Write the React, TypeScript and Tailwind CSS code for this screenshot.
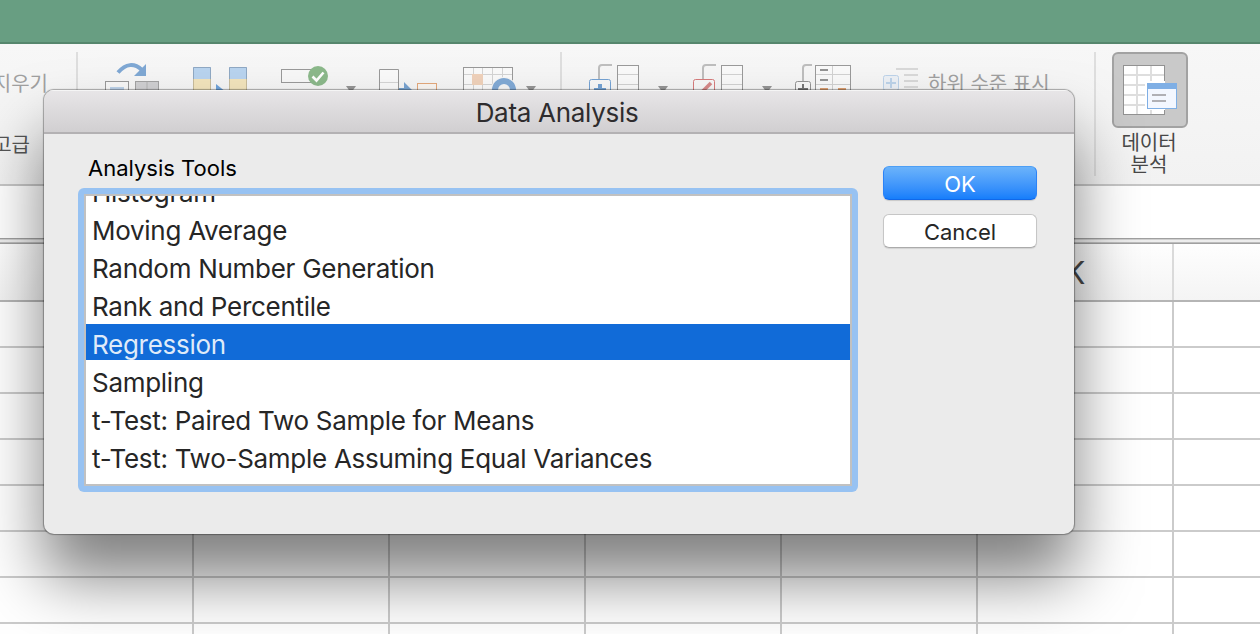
import React from "react";

const tools = [
  "Histogram",
  "Moving Average",
  "Random Number Generation",
  "Rank and Percentile",
  "Regression",
  "Sampling",
  "t-Test: Paired Two Sample for Means",
  "t-Test: Two-Sample Assuming Equal Variances",
];
const selected = "Regression";

function Divider({ className = "" }: { className?: string }) {
  return <div className={`mt-2 h-[124px] w-0.5 shrink-0 bg-[#dedede] ${className}`} />;
}

function ToolIcons() {
  return (
    <svg className="mt-2 h-16 w-[474px] shrink-0" viewBox="86 52 474 64" fill="none">
      <path d="M118 72.500Q130 59 142 70" stroke="#7fa8d4" strokeWidth="4" />
      <path d="M146 64V76H134Z" fill="#7fa8d4" />
      <rect x="105.5" y="81.5" width="23" height="20" fill="#f8f8f8" stroke="#9a9a9a" />
      <rect x="110" y="87" width="14" height="8" fill="#bcd2ea" />
      <rect x="135.500" y="81.500" width="23" height="20" fill="#d0d0d2" stroke="#a3a3a3" />
      <path d="M147 82v18" stroke="#b4b4b4" />
      {[193, 229].map((x) => (
        <g key={x}>
          <rect x={x} y="67" width="18" height="12" fill="#b9d4ef" />
          <rect x={x} y="79" width="18" height="20" fill="#f3e5bd" />
          <path d={`M${x + 0.5} 79V67.500h17V79`} stroke="#90a9c4" />
          <path d={`M${x + 0.5} 79v20M${x + 17.5} 79v20`} stroke="#c9bd9c" />
        </g>
      ))}
      <path d="M216 84l10 8-10 8z" fill="#6fa3da" />
      <rect x="281.500" y="69.500" width="38" height="13" fill="#f8f8f8" stroke="#9a9a9a" />
      <circle cx="318" cy="76" r="10" fill="#8cb98b" />
      <path d="M312.500 76.500l4 4 7-8" stroke="#fff" strokeWidth="2.600" />
      <path d="M346 86h10l-5 7z" fill="#949494" />
      <path d="M379.500 100V69.500h19V100" fill="#fafafa" stroke="#9a9a9a" />
      <path d="M380 82.500h18" stroke="#d5d5d5" />
      <path d="M399 88h5v-6l10 10-10 10v-6h-5z" fill="#79a4d1" />
      <rect x="417.500" y="83.500" width="19" height="18" fill="#faf6f2" stroke="#e4a87b" />
      <rect x="463.500" y="67.500" width="49" height="34" fill="#fafafa" stroke="#9a9a9a" />
      <path d="M464 74.500h48M464 84.500h48M473.500 68v32M482.500 68v32M492.500 68v32M502.500 68v32" stroke="#d4d4d4" />
      <rect x="472" y="74" width="11" height="11" fill="#f0d2bb" />
      <circle cx="504" cy="90" r="13" fill="#f6f6f6" />
      <circle cx="504" cy="90" r="9" stroke="#82aad6" strokeWidth="6" />
      <path d="M526 86h10l-5 7z" fill="#949494" />
    </svg>
  );
}

function OutlineIcons() {
  return (
    <svg className="mt-2 h-16 w-[358px] shrink-0" viewBox="562 52 358 64" fill="none">
      {[0, 104].map((d) => (
        <g key={d}>
          <path d={`M${599 + d} 79V68q0-3 3-3h10`} stroke="#bebebe" strokeWidth="2" />
          <rect x={617.5 + d} y="65.500" width="21" height="36" fill="#fafafa" stroke="#9a9a9a" />
          <path d={`M${618 + d} 74.500h20M${618 + d} 84.500h20`} stroke="#d2d2d2" />
          <rect x={589.5 + d} y="79.500" width="21" height="20" rx="2" fill="#f8f8f8" stroke={d ? "#d77c7c" : "#75a3d4"} />
          <path d={`M${658 + d} 86h10l-5 7z`} fill="#949494" />
        </g>
      ))}
      <path d="M600 84v12M594 90h12" stroke="#75a3d4" strokeWidth="4" />
      <path d="M697 97l14-14" stroke="#d78989" strokeWidth="3.500" />
      <path d="M803 81V68q0-3 3-3h6" stroke="#bebebe" strokeWidth="2" />
      <rect x="815.500" y="65.500" width="35" height="36" fill="#fafafa" stroke="#9a9a9a" />
      <path d="M816 74.500h34M816 84.500h34M832.500 66v34" stroke="#d2d2d2" />
      <path d="M820 70h8M820 80h8" stroke="#949494" strokeWidth="2" />
      <path d="M820 89h8M838 89h8" stroke="#dfa173" strokeWidth="2" />
      <rect x="795.500" y="81.500" width="15" height="18" rx="2" fill="#f8f8f8" stroke="#949494" />
      <path d="M803 84v10M798 89h10" stroke="#777" strokeWidth="2" />
      <rect x="883.500" y="75.500" width="15" height="15" rx="2" fill="#edf1f6" stroke="#bdd3ea" />
      <path d="M891 78v10M886 83h10" stroke="#bdd3ea" strokeWidth="2" />
      <path d="M896 69h22M904 75h14M904 81h14M904 87h14" stroke="#d9d9d9" strokeWidth="2" />
    </svg>
  );
}

function AnalysisIcon() {
  return (
    <svg className="h-[50px] w-[56px]" viewBox="0 0 56 50" fill="none">
      <rect x=".5" y=".5" width="41" height="49" fill="#fff" stroke="#929292" />
      <path d="M1 10h40M1 20h40M1 30h40M1 40h40M14 1v48M28 1v48" stroke="#dedede" strokeWidth="2" />
      <path d="M22 16h34v29H22z" fill="#c9c9c9" />
      <path d="M22 16h20v29H22z" fill="#fff" />
      <rect x="24.500" y="18.500" width="29" height="25" fill="#f3f7ff" stroke="#7fafe5" />
      <path d="M24 18h30v6H24z" fill="#7fafe5" />
      <path d="M29 30h14M29 36h14" stroke="#b0b0b5" strokeWidth="2" />
    </svg>
  );
}

function Ribbon() {
  return (
    <div className="flex h-[142px] shrink-0 items-start border-b-2 border-[#c6c6c6] bg-linear-to-b from-[#f7f7f7] to-[#f2f2f2] text-[20px] whitespace-nowrap">
      <div className="flex w-[76px] shrink-0 flex-col pt-[25px]">
        <div className="flex w-[48px] justify-end leading-[30px] text-[#a0a0a0]">지우기</div>
        <div className="mt-[31px] flex w-[30px] justify-end leading-[30px] text-[#555]">고급</div>
      </div>
      <Divider />
      <div className="w-2 shrink-0" />
      <ToolIcons />
      <Divider />
      <OutlineIcons />
      <div className="ml-[8px] w-[166px] shrink-0 pt-[25px] leading-[30px] text-[#a0a0a0]">하위 수준 표시</div>
      <Divider />
      <div className="ml-4 flex w-[76px] shrink-0 flex-col items-center pt-2">
        <div className="flex h-[76px] w-[76px] items-center justify-center rounded-md border-2 border-[#a2a2a2] bg-[#c9c9c9] pl-0.5">
          <AnalysisIcon />
        </div>
        <div className="mt-1 -ml-0.5 text-center leading-[22px] text-[#484848]">
          데이터
          <br />
          분석
        </div>
      </div>
    </div>
  );
}

const columns = ["", "", "", "", "", "K", ""];

function Sheet() {
  return (
    <div className="flex flex-col">
      <div className="h-[52px] bg-white" />
      <div className="h-1.5 border-t border-b border-[#a0a0a0] bg-[#ededed] shadow-[inset_0_1px_0_#cfcfcf,inset_0_-1px_0_#bdbdbd]" />
      <div className="grid h-[58px] grid-cols-[194px_196px_196px_196px_196px_196px_88px] border-b-2 border-[#b5b5b5] bg-linear-to-b from-[#fefefe] to-[#f4f4f4]">
        {columns.map((c, i) => (
          <div key={i} className="flex items-center justify-center border-r-2 border-[#dadada] pt-0.5 text-[31px] text-[#484848]">
            {c}
          </div>
        ))}
      </div>
      {Array.from({ length: 8 }, (_, r) => (
        <div key={r} className="grid h-[46px] grid-cols-[194px_196px_196px_196px_196px_196px_88px] bg-white">
          {columns.map((_c, i) => (
            <div key={i} className="border-r-2 border-b-2 border-[#cbcbcb]" />
          ))}
        </div>
      ))}
    </div>
  );
}

function Dialog() {
  return (
    <div className="absolute top-[90px] left-[44px] flex h-[444px] w-[1030px] flex-col overflow-hidden rounded-[10px] bg-[#ebebeb] shadow-[0_0_1px_1px_rgba(0,0,0,0.32),0_44px_64px_rgba(0,0,0,0.5)]">
      <div className="flex h-11 shrink-0 items-center justify-center border-b-2 border-[#b3b1b3] bg-linear-to-b from-[#e8e6e8] to-[#d1cfd1] pt-0.5 pr-1 text-[26px] tracking-[-0.3px] text-[#2e2c2e] shadow-[inset_0_1px_0_#f5f5f5]">
        Data Analysis
      </div>
      <div className="flex pl-[34px]">
        <div className="flex w-[780px] flex-col">
          <div className="mt-[19px] pl-[10px] text-[22px] leading-[30px] text-black">Analysis Tools</div>
          <div className="mt-[5px] h-[304px] rounded-md bg-[#97c2f2] p-1.5">
            <div className="h-[292px] overflow-hidden border-2 border-[#c1c1c1] bg-white">
              <div className="-mt-6 flex flex-col gap-0.5 text-[26px] tracking-[-0.28px]">
                {tools.map((t) => (
                  <div
                    key={t}
                    className={
                      t === selected
                        ? "flex h-9 shrink-0 items-center bg-[#116bd8] pt-1 pl-1.5 text-[#dfeaf9]"
                        : "flex h-9 shrink-0 items-center pt-1 pl-1.5 text-[#262626]"
                    }
                  >
                    {t}
                  </div>
                ))}
              </div>
            </div>
          </div>
        </div>
        <div className="mt-8 ml-[25px] flex w-[154px] flex-col gap-[14px] text-[22px]">
          <button className="h-[34px] rounded-md border border-t-[#4d9ff5] border-r-[#2c83f7] border-b-[#1068ea] border-l-[#2c83f7] bg-linear-to-b from-[#6bb3fa] to-[#157efb] pt-0.5 leading-[30px] text-white shadow-[0_1px_1px_rgba(0,0,0,0.15)]">
            OK
          </button>
          <button className="h-[34px] rounded-md border border-[#c6c6c6] border-b-[#ababab] bg-white pt-0.5 leading-[30px] text-[#262626] shadow-[0_1px_1px_rgba(0,0,0,0.1)]">
            Cancel
          </button>
        </div>
      </div>
    </div>
  );
}

export default function App() {
  return (
    <div className="relative flex h-[634px] w-[1260px] flex-col overflow-hidden bg-white font-['Inter','Noto_Sans_CJK_KR',sans-serif]">
      <div className="h-11 shrink-0 border-b-2 border-[#56866d] bg-[#689e82]" />
      <Ribbon />
      <Sheet />
      <Dialog />
    </div>
  );
}
